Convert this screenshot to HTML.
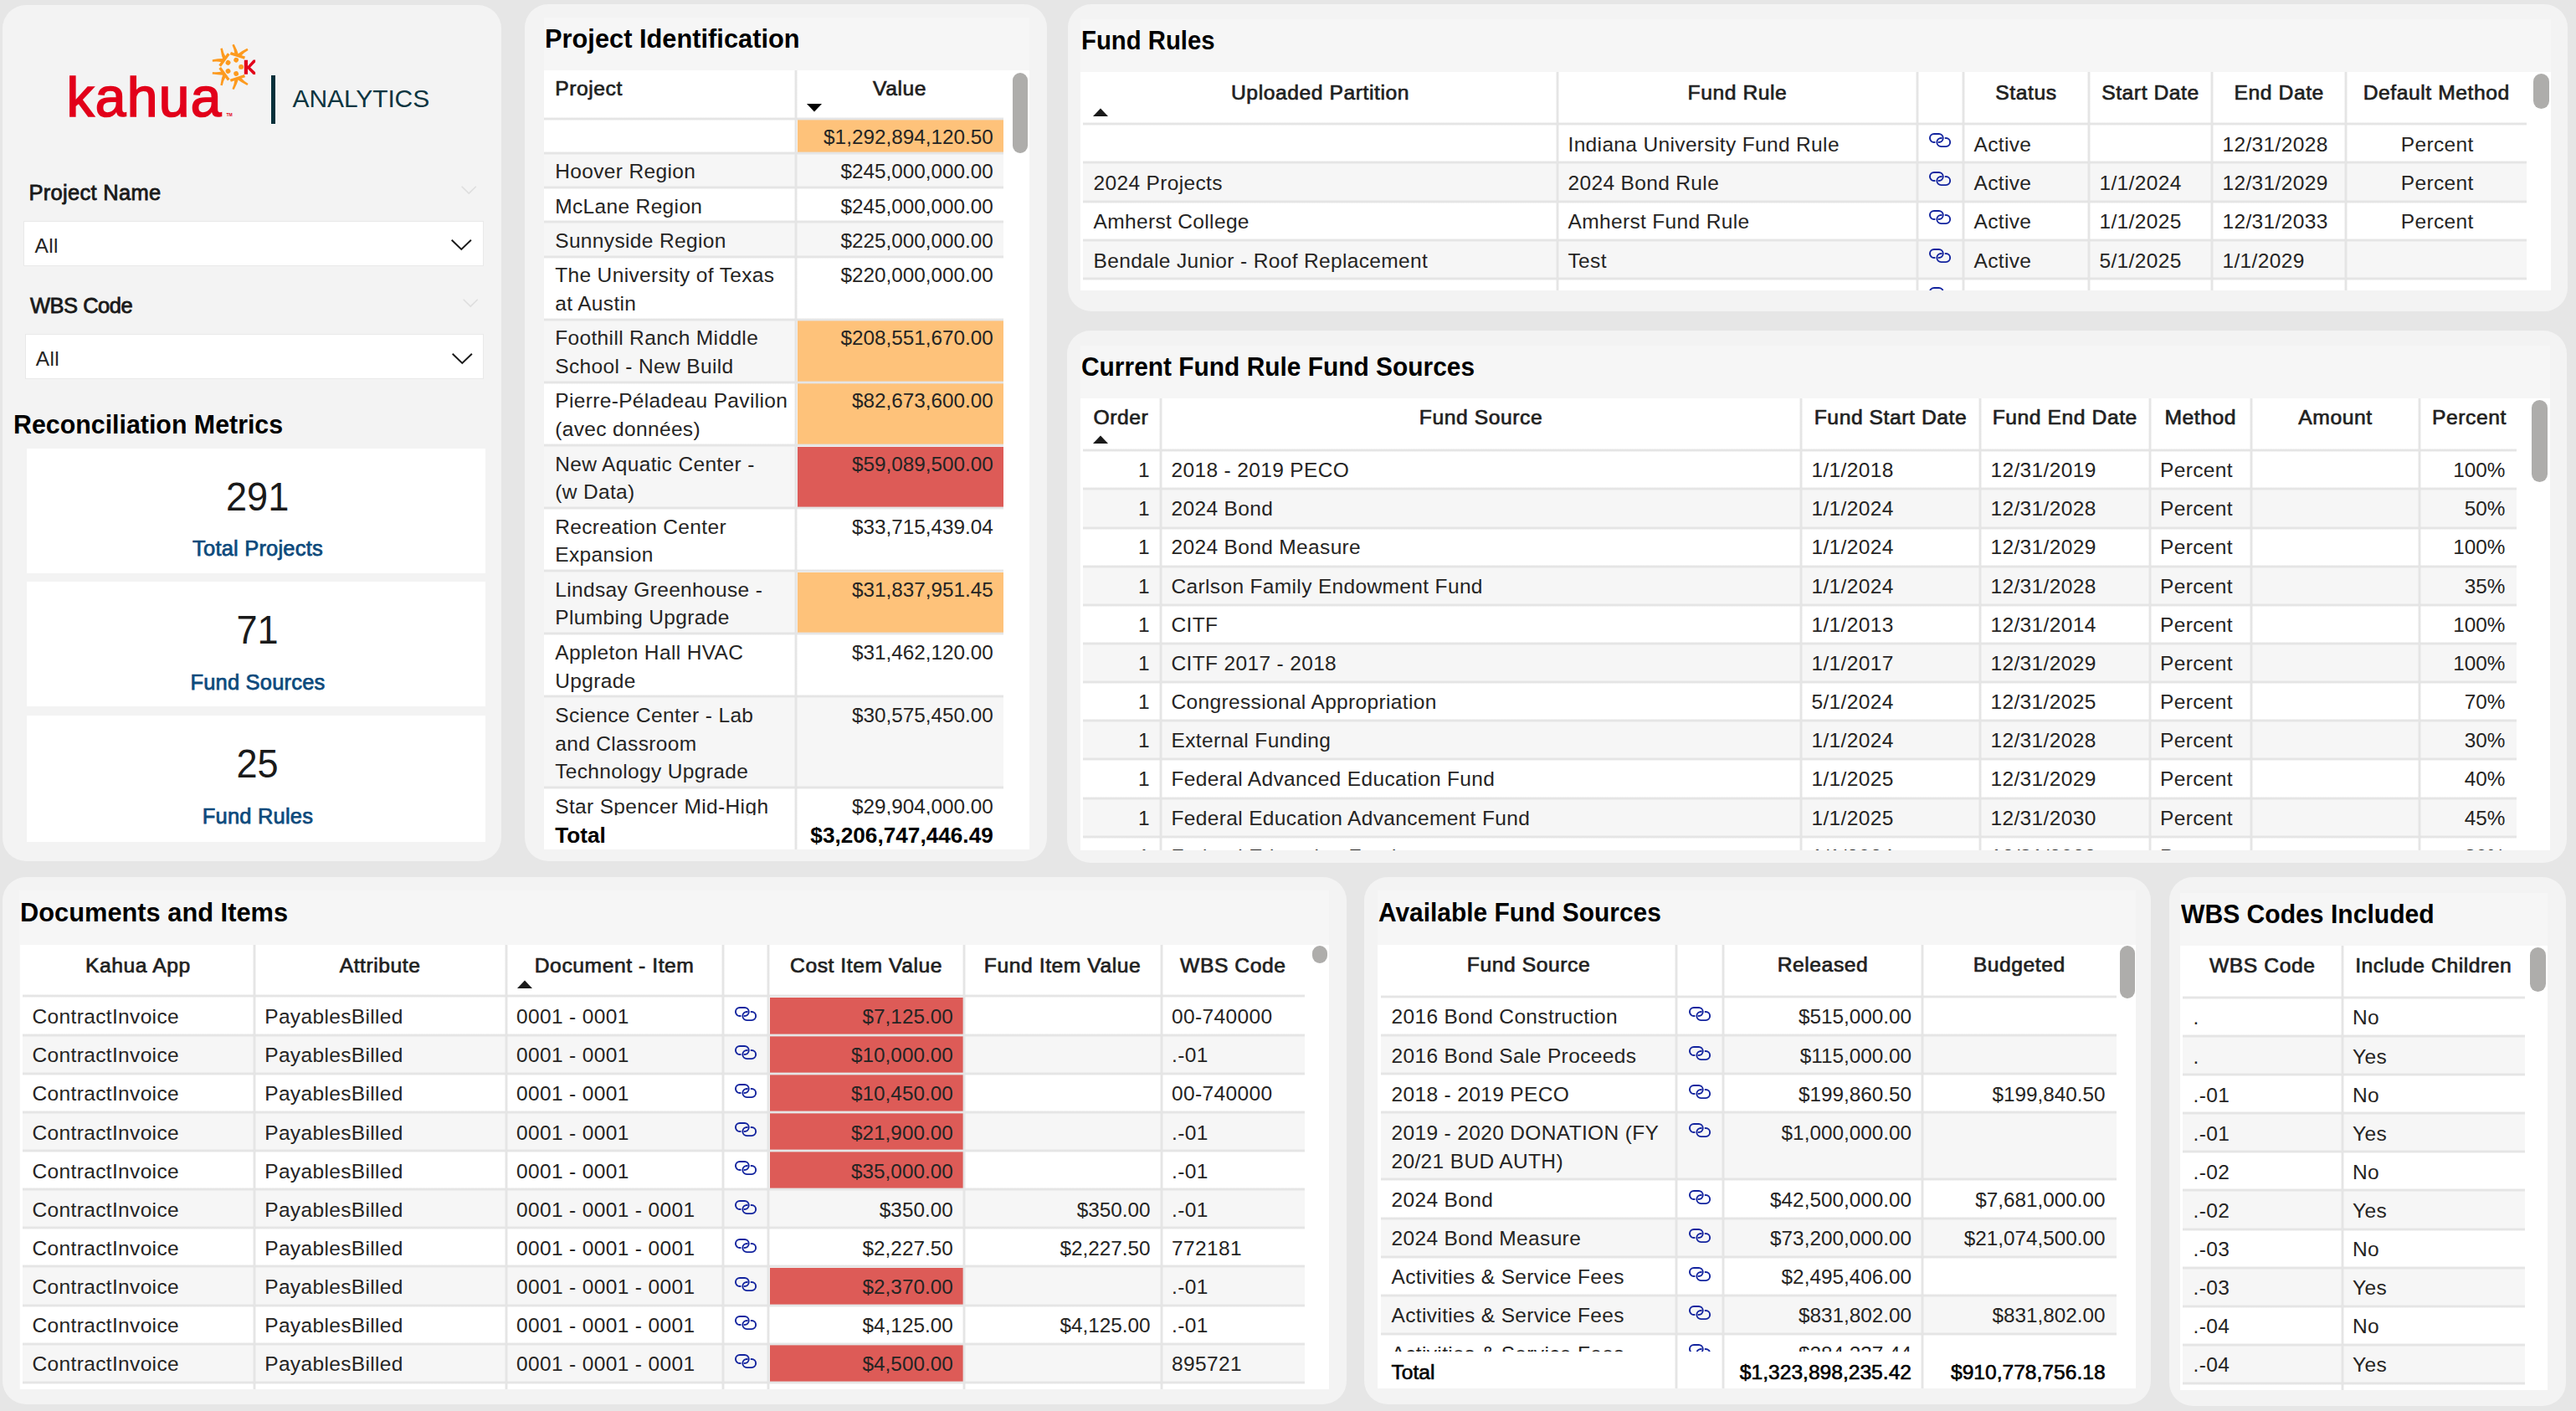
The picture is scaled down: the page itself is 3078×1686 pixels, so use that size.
<!DOCTYPE html>
<html><head><meta charset="utf-8"><title>Kahua Analytics</title>
<style>
*{box-sizing:border-box;margin:0;padding:0}
html,body{width:3078px;height:1686px;overflow:hidden;background:#e6e6e6}
body{position:relative;font-family:"Liberation Sans",sans-serif;color:#252423;font-size:24.5px;line-height:34px}
.abs{position:absolute}
.panel{position:absolute;background:#f3f3f3;border-radius:28px}
.vis{position:absolute;background:#f6f6f6}
.title{position:absolute;font-weight:bold;color:#000;white-space:nowrap;line-height:40px;transform-origin:0 0}
.tbl{position:absolute;background:#fff;overflow:hidden}
.clip{position:absolute;overflow:hidden}
.row{position:absolute;overflow:hidden}
.fill{position:absolute}
.c{position:absolute;white-space:nowrap;line-height:33.8px;font-size:24.5px;letter-spacing:0.35px;color:#252423}
.c.n{font-size:24.3px;letter-spacing:0}
.c.pc{padding-right:1px}
.c.wrap{white-space:normal}
.h{position:absolute;white-space:nowrap;line-height:34px;font-size:24.7px;letter-spacing:0.55px;-webkit-text-stroke:0.7px #1f1f1f;color:#1f1f1f}
.h.t{color:#000;font-size:26.2px;font-weight:bold;letter-spacing:0;-webkit-text-stroke:0}
.h.t.sb2{font-weight:normal;-webkit-text-stroke:0.6px #000}
.left{text-align:left}.right{text-align:right}.center{text-align:center}
.hdr{position:absolute;background:#fff}
.tot{position:absolute;background:#fff}
.hl{position:absolute;height:4px;margin-top:-1px;background:linear-gradient(to bottom,rgba(226,226,226,.4) 0,rgba(226,226,226,.4) 1px,#e5e5e5 1px,#e5e5e5 3px,rgba(226,226,226,.4) 3px,rgba(226,226,226,.4) 4px)}
.vl{position:absolute;width:4px;margin-left:-1px;background:linear-gradient(to right,rgba(226,226,226,.4) 0,rgba(226,226,226,.4) 1px,#e5e5e5 1px,#e5e5e5 3px,rgba(226,226,226,.4) 3px,rgba(226,226,226,.4) 4px)}
.lk{position:absolute;overflow:visible}
.lk path{fill:none;stroke:#12239e;stroke-width:1.9;stroke-linecap:round}
.sb{position:absolute;background:#aeadab;border-radius:10px}
.dd{position:absolute;background:#fff;border:1px solid #e9e9e9}
.card{position:absolute;background:#fff}
.num{position:absolute;left:2px;width:100%;text-align:center;font-size:48px;line-height:50px;color:#1a1a1a;transform:scaleX(0.94);transform-origin:50% 50%}
.lbl{position:absolute;left:2px;width:100%;text-align:center;font-size:25.5px;letter-spacing:0.2px;line-height:30px;-webkit-text-stroke:0.75px #0c4a7c;color:#0c4a7c}
.sl{position:absolute;font-size:25.5px;letter-spacing:0.3px;-webkit-text-stroke:0.8px #1a1a1a;line-height:30px;color:#1a1a1a;white-space:nowrap}
</style></head><body>

<div class="panel" style="left:3px;top:6px;width:596px;height:1023px"></div>
<div class="abs" style="left:79.4px;top:76.6px;font-size:66px;line-height:78px;color:#e2001a;-webkit-text-stroke:1.7px #e2001a;white-space:nowrap;letter-spacing:1.3px">kahua</div>
<div class="abs" style="left:270.5px;top:134.3px;font-size:5px;line-height:6px;color:#e2001a;font-weight:bold">TM</div>
<svg class="abs" style="left:244px;top:45px" width="70" height="70" viewBox="-35.5 -34.9 70 70"><g fill="#fd9a1e"><circle cx="8.6" cy="0" r="2.9"/><g transform="rotate(18)"><circle cx="0" cy="-8.6" r="2.9"/><rect x="-9" y="-15.9" width="18" height="3.3"/><path d="M-4,-15.2 L1.6,-14.4 Q-2.4,-20.4 -8.2,-25.9 L-10.1,-24.3 Q-6,-20 -4,-15.2 Z"/><path d="M4,-15.2 L-1.6,-14.4 Q2.4,-20.4 8.2,-25.9 L10.1,-24.3 Q6,-20 4,-15.2 Z"/></g><g transform="rotate(-54)"><circle cx="0" cy="-8.6" r="2.9"/><rect x="-9" y="-15.9" width="18" height="3.3"/><path d="M-4,-15.2 L1.6,-14.4 Q-2.4,-20.4 -8.2,-25.9 L-10.1,-24.3 Q-6,-20 -4,-15.2 Z"/><path d="M4,-15.2 L-1.6,-14.4 Q2.4,-20.4 8.2,-25.9 L10.1,-24.3 Q6,-20 4,-15.2 Z"/></g><g transform="rotate(-126)"><circle cx="0" cy="-8.6" r="2.9"/><rect x="-9" y="-15.9" width="18" height="3.3"/><path d="M-4,-15.2 L1.6,-14.4 Q-2.4,-20.4 -8.2,-25.9 L-10.1,-24.3 Q-6,-20 -4,-15.2 Z"/><path d="M4,-15.2 L-1.6,-14.4 Q2.4,-20.4 8.2,-25.9 L10.1,-24.3 Q6,-20 4,-15.2 Z"/></g><g transform="rotate(162)"><circle cx="0" cy="-8.6" r="2.9"/><rect x="-9" y="-15.9" width="18" height="3.3"/><path d="M-4,-15.2 L1.6,-14.4 Q-2.4,-20.4 -8.2,-25.9 L-10.1,-24.3 Q-6,-20 -4,-15.2 Z"/><path d="M4,-15.2 L-1.6,-14.4 Q2.4,-20.4 8.2,-25.9 L10.1,-24.3 Q6,-20 4,-15.2 Z"/></g></g><path d="M12.3,-8.1 h4.2 v17 h-4.2 Z M16.3,-0.6 L23.2,-8.4 L25.6,-8.4 L25.6,-5.6 L19.6,0.6 L25.6,6.4 L25.6,9.2 L23,9.2 L16.3,2.2 Z" fill="#e2001a"/></svg>
<div class="abs" style="left:324px;top:90px;width:5px;height:58px;background:#06303a"></div>
<div class="abs" style="left:349.5px;top:98px;font-size:30px;line-height:40px;color:#0c3540;letter-spacing:-0.1px;white-space:nowrap">ANALYTICS</div>
<div class="sl" style="left:34.5px;top:215.4px">Project Name</div>
<svg class="abs" style="left:551px;top:221.5px;overflow:visible" width="18.5" height="10" viewBox="0 0 18.5 10"><path d="M0.7,0.7 L9.25,9.1 L17.8,0.7" fill="none" stroke="#dedede" stroke-width="1.6"/></svg>
<div class="dd" style="left:28px;top:263.5px;width:550px;height:54px"></div>
<div class="c" style="left:41.5px;top:277.2px">All</div>
<svg class="abs" style="left:538.6px;top:286.4px;overflow:visible" width="24.6" height="12.8" viewBox="0 0 24.6 12.8"><path d="M0.7,0.7 L12.3,11.9 L23.900000000000002,0.7" fill="none" stroke="#1a1a1a" stroke-width="2"/></svg>
<div class="sl" style="left:36px;top:349.8px;letter-spacing:-0.5px">WBS Code</div>
<svg class="abs" style="left:552.5px;top:356.5px;overflow:visible" width="18.5" height="10" viewBox="0 0 18.5 10"><path d="M0.7,0.7 L9.25,9.1 L17.8,0.7" fill="none" stroke="#dedede" stroke-width="1.6"/></svg>
<div class="dd" style="left:29.5px;top:398.7px;width:548.5px;height:54px"></div>
<div class="c" style="left:42.8px;top:412.2px">All</div>
<svg class="abs" style="left:539.6px;top:421.6px;overflow:visible" width="24.6" height="12.8" viewBox="0 0 24.6 12.8"><path d="M0.7,0.7 L12.3,11.9 L23.900000000000002,0.7" fill="none" stroke="#1a1a1a" stroke-width="2"/></svg>
<div class="title" style="left:15.5px;top:487.4px;font-size:31.5px;transform:scaleX(0.9635)">Reconciliation Metrics</div>
<div class="card" style="left:32.4px;top:535.8px;width:547.2px;height:149.1px"><div class="num" style="top:33.0px">291</div><div class="lbl" style="top:104.6px">Total Projects</div></div>
<div class="card" style="left:32.4px;top:695px;width:547.2px;height:149.0px"><div class="num" style="top:33.0px">71</div><div class="lbl" style="top:104.6px">Fund Sources</div></div>
<div class="card" style="left:32.4px;top:855px;width:547.2px;height:151.0px"><div class="num" style="top:33.0px">25</div><div class="lbl" style="top:104.6px">Fund Rules</div></div>
<div class="panel" style="left:627px;top:5px;width:624px;height:1024px"></div>
<div class="vis" style="left:650px;top:21px;width:580px;height:994px"></div>
<div class="title" style="left:651px;top:25.8px;font-size:31.5px;transform:scaleX(0.9778)">Project Identification</div>
<div class="tbl" style="left:650px;top:84px;width:580px;height:931px">
<div class="clip" style="left:0;top:57.5px;width:580px;height:832.5px">
<div class="row" style="left:0px;top:0.00px;width:549px;height:41.30px;background:#fff">
<div class="fill" style="left:302.5px;top:1.5px;width:246.5px;height:39.80px;background:#fec27a"></div>
<div class="c n right" style="left:314.2px;top:5.50px;width:222.60px">$1,292,894,120.50</div>
</div>
<div class="row" style="left:0px;top:41.30px;width:549px;height:41.30px;background:#f6f6f6">
<div class="c x left" style="left:13.2px;top:5.50px;width:276.60px">Hoover Region</div>
<div class="c n right" style="left:314.2px;top:5.50px;width:222.60px">$245,000,000.00</div>
</div>
<div class="row" style="left:0px;top:82.60px;width:549px;height:41.30px;background:#fff">
<div class="c x left" style="left:13.2px;top:5.50px;width:276.60px">McLane Region</div>
<div class="c n right" style="left:314.2px;top:5.50px;width:222.60px">$245,000,000.00</div>
</div>
<div class="row" style="left:0px;top:123.90px;width:549px;height:41.30px;background:#f6f6f6">
<div class="c x left" style="left:13.2px;top:5.50px;width:276.60px">Sunnyside Region</div>
<div class="c n right" style="left:314.2px;top:5.50px;width:222.60px">$225,000,000.00</div>
</div>
<div class="row" style="left:0px;top:165.20px;width:549px;height:75.10px;background:#fff">
<div class="c x left" style="left:13.2px;top:5.50px;width:276.60px">The University of Texas<br>at Austin</div>
<div class="c n right" style="left:314.2px;top:5.50px;width:222.60px">$220,000,000.00</div>
</div>
<div class="row" style="left:0px;top:240.30px;width:549px;height:75.10px;background:#f6f6f6">
<div class="c x left" style="left:13.2px;top:5.50px;width:276.60px">Foothill Ranch Middle<br>School - New Build</div>
<div class="fill" style="left:302.5px;top:1.5px;width:246.5px;height:73.60px;background:#fec27a"></div>
<div class="c n right" style="left:314.2px;top:5.50px;width:222.60px">$208,551,670.00</div>
</div>
<div class="row" style="left:0px;top:315.40px;width:549px;height:75.10px;background:#fff">
<div class="c x left" style="left:13.2px;top:5.50px;width:276.60px">Pierre-Péladeau Pavilion<br>(avec données)</div>
<div class="fill" style="left:302.5px;top:1.5px;width:246.5px;height:73.60px;background:#fec27a"></div>
<div class="c n right" style="left:314.2px;top:5.50px;width:222.60px">$82,673,600.00</div>
</div>
<div class="row" style="left:0px;top:390.50px;width:549px;height:75.10px;background:#f6f6f6">
<div class="c x left" style="left:13.2px;top:5.50px;width:276.60px">New Aquatic Center -<br>(w Data)</div>
<div class="fill" style="left:302.5px;top:1.5px;width:246.5px;height:73.60px;background:#dd5b57"></div>
<div class="c n right" style="left:314.2px;top:5.50px;width:222.60px">$59,089,500.00</div>
</div>
<div class="row" style="left:0px;top:465.60px;width:549px;height:75.10px;background:#fff">
<div class="c x left" style="left:13.2px;top:5.50px;width:276.60px">Recreation Center<br>Expansion</div>
<div class="c n right" style="left:314.2px;top:5.50px;width:222.60px">$33,715,439.04</div>
</div>
<div class="row" style="left:0px;top:540.70px;width:549px;height:75.10px;background:#f6f6f6">
<div class="c x left" style="left:13.2px;top:5.50px;width:276.60px">Lindsay Greenhouse -<br>Plumbing Upgrade</div>
<div class="fill" style="left:302.5px;top:1.5px;width:246.5px;height:73.60px;background:#fec27a"></div>
<div class="c n right" style="left:314.2px;top:5.50px;width:222.60px">$31,837,951.45</div>
</div>
<div class="row" style="left:0px;top:615.80px;width:549px;height:75.10px;background:#fff">
<div class="c x left" style="left:13.2px;top:5.50px;width:276.60px">Appleton Hall HVAC<br>Upgrade</div>
<div class="c n right" style="left:314.2px;top:5.50px;width:222.60px">$31,462,120.00</div>
</div>
<div class="row" style="left:0px;top:690.90px;width:549px;height:108.90px;background:#f6f6f6">
<div class="c x left" style="left:13.2px;top:5.50px;width:276.60px">Science Center - Lab<br>and Classroom<br>Technology Upgrade</div>
<div class="c n right" style="left:314.2px;top:5.50px;width:222.60px">$30,575,450.00</div>
</div>
<div class="row" style="left:0px;top:799.80px;width:549px;height:41.30px;background:#fff">
<div class="c x left" style="left:13.2px;top:5.50px;width:276.60px">Star Spencer Mid-High</div>
<div class="c n right" style="left:314.2px;top:5.50px;width:222.60px">$29,904,000.00</div>
</div>
</div>
<div class="hdr" style="left:0;top:0;width:580px;height:57.5px">
<div class="h left" style="left:13.2px;top:5.14px;width:274.6px">Project</div>
<div class="h center" style="left:314.2px;top:5.14px;width:221.6px">Value</div>
<svg class="abs" style="left:314.4px;top:40.3px" width="18" height="10" viewBox="0 0 18 10"><path d="M0,0 L18,0 L9,9.5 Z" fill="#000"/></svg>
</div>
<div class="tot" style="left:0;top:890px;width:580px;height:41px">
<div class="h t  left" style="font-size:26.2px;left:13.2px;top:7.14px;width:276.60px">Total</div>
<div class="h t  right" style="font-size:26.2px;left:314.2px;top:7.14px;width:222.60px">$3,206,747,446.49</div>
</div>
<div class="hl" style="left:0px;top:56.5px;width:549px"></div>
<div class="hl" style="left:0px;top:97.80px;width:549px"></div>
<div class="hl" style="left:0px;top:139.10px;width:549px"></div>
<div class="hl" style="left:0px;top:180.40px;width:549px"></div>
<div class="hl" style="left:0px;top:221.70px;width:549px"></div>
<div class="hl" style="left:0px;top:296.80px;width:549px"></div>
<div class="hl" style="left:0px;top:371.90px;width:549px"></div>
<div class="hl" style="left:0px;top:447.00px;width:549px"></div>
<div class="hl" style="left:0px;top:522.10px;width:549px"></div>
<div class="hl" style="left:0px;top:597.20px;width:549px"></div>
<div class="hl" style="left:0px;top:672.30px;width:549px"></div>
<div class="hl" style="left:0px;top:747.40px;width:549px"></div>
<div class="hl" style="left:0px;top:856.30px;width:549px"></div>
<div class="vl" style="left:300px;top:0;height:931px"></div>
</div>
<div class="sb" style="left:1210px;top:87px;width:17.5px;height:96px"></div>
<div class="panel" style="left:1275.9px;top:4.8px;width:1791.9px;height:367px"></div>
<div class="vis" style="left:1290.7px;top:23px;width:1757.5px;height:323.8px"></div>
<div class="title" style="left:1291.5px;top:27.8px;font-size:31.5px;transform:scaleX(0.9302)">Fund Rules</div>
<div class="tbl" style="left:1290.7px;top:86.1px;width:1757.4999999999998px;height:260.70000000000005px">
<div class="clip" style="left:0;top:62.1px;width:1757.4999999999998px;height:198.60000000000005px">
<div class="row" style="left:3.2999999999999545px;top:0.00px;width:1725px;height:46.20px;background:#fff">
<div class="c x left" style="left:579.5px;top:7.90px;width:407.00px">Indiana University Fund Rule</div>
<svg class="lk" style="left:1011.5px;top:10.5px" width="27" height="18" viewBox="0 0 27 18"><path d="M6.7,11.05 L6,11.05 A5.05,5.05 0 0 1 0.95,6 A5.05,5.05 0 0 1 6,0.95 L11.7,0.95 A5.05,5.05 0 0 1 16.75,6 A5.05,5.05 0 0 1 11.7,11.05 L11.5,11.05"/><path d="M19.6,6.05 L20.1,6.05 A5.05,5.05 0 0 1 25.15,11.1 A5.05,5.05 0 0 1 20.1,16.15 L14.4,16.15 A5.05,5.05 0 0 1 9.35,11.1 A5.05,5.05 0 0 1 14.4,6.05 L14.8,6.05"/></svg>
<div class="c x left" style="left:1064.5px;top:7.90px;width:127.00px">Active</div>
<div class="c x left" style="left:1361.5px;top:7.90px;width:137.50px">12/31/2028</div>
<div class="c x center" style="left:1522.0px;top:7.90px;width:192.50px">Percent</div>
</div>
<div class="row" style="left:3.2999999999999545px;top:46.20px;width:1725px;height:46.20px;background:#f6f6f6">
<div class="c x left" style="left:12.5px;top:7.90px;width:544.00px">2024 Projects</div>
<div class="c x left" style="left:579.5px;top:7.90px;width:407.00px">2024 Bond Rule</div>
<svg class="lk" style="left:1011.5px;top:10.5px" width="27" height="18" viewBox="0 0 27 18"><path d="M6.7,11.05 L6,11.05 A5.05,5.05 0 0 1 0.95,6 A5.05,5.05 0 0 1 6,0.95 L11.7,0.95 A5.05,5.05 0 0 1 16.75,6 A5.05,5.05 0 0 1 11.7,11.05 L11.5,11.05"/><path d="M19.6,6.05 L20.1,6.05 A5.05,5.05 0 0 1 25.15,11.1 A5.05,5.05 0 0 1 20.1,16.15 L14.4,16.15 A5.05,5.05 0 0 1 9.35,11.1 A5.05,5.05 0 0 1 14.4,6.05 L14.8,6.05"/></svg>
<div class="c x left" style="left:1064.5px;top:7.90px;width:127.00px">Active</div>
<div class="c x left" style="left:1214.5px;top:7.90px;width:124.00px">1/1/2024</div>
<div class="c x left" style="left:1361.5px;top:7.90px;width:137.50px">12/31/2029</div>
<div class="c x center" style="left:1522.0px;top:7.90px;width:192.50px">Percent</div>
</div>
<div class="row" style="left:3.2999999999999545px;top:92.40px;width:1725px;height:46.20px;background:#fff">
<div class="c x left" style="left:12.5px;top:7.90px;width:544.00px">Amherst College</div>
<div class="c x left" style="left:579.5px;top:7.90px;width:407.00px">Amherst Fund Rule</div>
<svg class="lk" style="left:1011.5px;top:10.5px" width="27" height="18" viewBox="0 0 27 18"><path d="M6.7,11.05 L6,11.05 A5.05,5.05 0 0 1 0.95,6 A5.05,5.05 0 0 1 6,0.95 L11.7,0.95 A5.05,5.05 0 0 1 16.75,6 A5.05,5.05 0 0 1 11.7,11.05 L11.5,11.05"/><path d="M19.6,6.05 L20.1,6.05 A5.05,5.05 0 0 1 25.15,11.1 A5.05,5.05 0 0 1 20.1,16.15 L14.4,16.15 A5.05,5.05 0 0 1 9.35,11.1 A5.05,5.05 0 0 1 14.4,6.05 L14.8,6.05"/></svg>
<div class="c x left" style="left:1064.5px;top:7.90px;width:127.00px">Active</div>
<div class="c x left" style="left:1214.5px;top:7.90px;width:124.00px">1/1/2025</div>
<div class="c x left" style="left:1361.5px;top:7.90px;width:137.50px">12/31/2033</div>
<div class="c x center" style="left:1522.0px;top:7.90px;width:192.50px">Percent</div>
</div>
<div class="row" style="left:3.2999999999999545px;top:138.60px;width:1725px;height:46.20px;background:#f6f6f6">
<div class="c x left" style="left:12.5px;top:7.90px;width:544.00px">Bendale Junior - Roof Replacement</div>
<div class="c x left" style="left:579.5px;top:7.90px;width:407.00px">Test</div>
<svg class="lk" style="left:1011.5px;top:10.5px" width="27" height="18" viewBox="0 0 27 18"><path d="M6.7,11.05 L6,11.05 A5.05,5.05 0 0 1 0.95,6 A5.05,5.05 0 0 1 6,0.95 L11.7,0.95 A5.05,5.05 0 0 1 16.75,6 A5.05,5.05 0 0 1 11.7,11.05 L11.5,11.05"/><path d="M19.6,6.05 L20.1,6.05 A5.05,5.05 0 0 1 25.15,11.1 A5.05,5.05 0 0 1 20.1,16.15 L14.4,16.15 A5.05,5.05 0 0 1 9.35,11.1 A5.05,5.05 0 0 1 14.4,6.05 L14.8,6.05"/></svg>
<div class="c x left" style="left:1064.5px;top:7.90px;width:127.00px">Active</div>
<div class="c x left" style="left:1214.5px;top:7.90px;width:124.00px">5/1/2025</div>
<div class="c x left" style="left:1361.5px;top:7.90px;width:137.50px">1/1/2029</div>
</div>
<div class="row" style="left:3.2999999999999545px;top:184.80px;width:1725px;height:46.20px;background:#fff">
<svg class="lk" style="left:1011.5px;top:10.5px" width="27" height="18" viewBox="0 0 27 18"><path d="M6.7,11.05 L6,11.05 A5.05,5.05 0 0 1 0.95,6 A5.05,5.05 0 0 1 6,0.95 L11.7,0.95 A5.05,5.05 0 0 1 16.75,6 A5.05,5.05 0 0 1 11.7,11.05 L11.5,11.05"/><path d="M19.6,6.05 L20.1,6.05 A5.05,5.05 0 0 1 25.15,11.1 A5.05,5.05 0 0 1 20.1,16.15 L14.4,16.15 A5.05,5.05 0 0 1 9.35,11.1 A5.05,5.05 0 0 1 14.4,6.05 L14.8,6.05"/></svg>
</div>
</div>
<div class="hdr" style="left:0;top:0;width:1757.4999999999998px;height:62.1px">
<div class="h center" style="left:15.799999999999955px;top:7.54px;width:542.0px">Uploaded Partition</div>
<div class="h center" style="left:582.8px;top:7.54px;width:405.0px">Fund Rule</div>
<div class="h center" style="left:1067.8px;top:7.54px;width:125.0px">Status</div>
<div class="h center" style="left:1217.8px;top:7.54px;width:122.0px">Start Date</div>
<div class="h center" style="left:1364.8px;top:7.54px;width:135.5px">End Date</div>
<div class="h center" style="left:1525.3px;top:7.54px;width:190.5px">Default Method</div>
<svg class="abs" style="left:15.099999999999909px;top:42.900000000000006px" width="18" height="10" viewBox="0 0 18 10"><path d="M0,10 L9,0.5 L18,10 Z" fill="#1a1a1a"/></svg>
</div>
<div class="hl" style="left:3.2999999999999545px;top:61.1px;width:1725px"></div>
<div class="hl" style="left:3.2999999999999545px;top:107.30px;width:1725px"></div>
<div class="hl" style="left:3.2999999999999545px;top:153.50px;width:1725px"></div>
<div class="hl" style="left:3.2999999999999545px;top:199.70px;width:1725px"></div>
<div class="hl" style="left:3.2999999999999545px;top:245.90px;width:1725px"></div>
<div class="vl" style="left:569.3px;top:0;height:260.70000000000005px"></div>
<div class="vl" style="left:999.3px;top:0;height:260.70000000000005px"></div>
<div class="vl" style="left:1054.3px;top:0;height:260.70000000000005px"></div>
<div class="vl" style="left:1204.3px;top:0;height:260.70000000000005px"></div>
<div class="vl" style="left:1351.3px;top:0;height:260.70000000000005px"></div>
<div class="vl" style="left:1511.8px;top:0;height:260.70000000000005px"></div>
</div>
<div class="sb" style="left:3026.8px;top:87.5px;width:19.3px;height:42.3px"></div>
<div class="panel" style="left:1274.6px;top:394.9px;width:1792px;height:635.8px"></div>
<div class="vis" style="left:1290.7px;top:413px;width:1756px;height:603.4px"></div>
<div class="title" style="left:1291.5px;top:417.9px;font-size:31.5px;transform:scaleX(0.9492)">Current Fund Rule Fund Sources</div>
<div class="tbl" style="left:1290.7px;top:476px;width:1755.9999999999998px;height:540.4px">
<div class="clip" style="left:0;top:62.2px;width:1755.9999999999998px;height:478.2px">
<div class="row" style="left:3.2999999999999545px;top:0.00px;width:1713.5px;height:46.15px;background:#fff">
<div class="c x right" style="left:12.5px;top:7.00px;width:67.50px">1</div>
<div class="c x left" style="left:105.5px;top:7.00px;width:742.00px">2018 - 2019 PECO</div>
<div class="c x left" style="left:870.5px;top:7.00px;width:191.00px">1/1/2018</div>
<div class="c x left" style="left:1084.5px;top:7.00px;width:179.60px">12/31/2019</div>
<div class="c x left" style="left:1287.1px;top:7.00px;width:98.40px">Percent</div>
<div class="c n pc right" style="left:1609.5px;top:7.00px;width:91.00px">100%</div>
</div>
<div class="row" style="left:3.2999999999999545px;top:46.15px;width:1713.5px;height:46.15px;background:#f6f6f6">
<div class="c x right" style="left:12.5px;top:7.00px;width:67.50px">1</div>
<div class="c x left" style="left:105.5px;top:7.00px;width:742.00px">2024 Bond</div>
<div class="c x left" style="left:870.5px;top:7.00px;width:191.00px">1/1/2024</div>
<div class="c x left" style="left:1084.5px;top:7.00px;width:179.60px">12/31/2028</div>
<div class="c x left" style="left:1287.1px;top:7.00px;width:98.40px">Percent</div>
<div class="c n pc right" style="left:1609.5px;top:7.00px;width:91.00px">50%</div>
</div>
<div class="row" style="left:3.2999999999999545px;top:92.30px;width:1713.5px;height:46.15px;background:#fff">
<div class="c x right" style="left:12.5px;top:7.00px;width:67.50px">1</div>
<div class="c x left" style="left:105.5px;top:7.00px;width:742.00px">2024 Bond Measure</div>
<div class="c x left" style="left:870.5px;top:7.00px;width:191.00px">1/1/2024</div>
<div class="c x left" style="left:1084.5px;top:7.00px;width:179.60px">12/31/2029</div>
<div class="c x left" style="left:1287.1px;top:7.00px;width:98.40px">Percent</div>
<div class="c n pc right" style="left:1609.5px;top:7.00px;width:91.00px">100%</div>
</div>
<div class="row" style="left:3.2999999999999545px;top:138.45px;width:1713.5px;height:46.15px;background:#f6f6f6">
<div class="c x right" style="left:12.5px;top:7.00px;width:67.50px">1</div>
<div class="c x left" style="left:105.5px;top:7.00px;width:742.00px">Carlson Family Endowment Fund</div>
<div class="c x left" style="left:870.5px;top:7.00px;width:191.00px">1/1/2024</div>
<div class="c x left" style="left:1084.5px;top:7.00px;width:179.60px">12/31/2028</div>
<div class="c x left" style="left:1287.1px;top:7.00px;width:98.40px">Percent</div>
<div class="c n pc right" style="left:1609.5px;top:7.00px;width:91.00px">35%</div>
</div>
<div class="row" style="left:3.2999999999999545px;top:184.60px;width:1713.5px;height:46.15px;background:#fff">
<div class="c x right" style="left:12.5px;top:7.00px;width:67.50px">1</div>
<div class="c x left" style="left:105.5px;top:7.00px;width:742.00px">CITF</div>
<div class="c x left" style="left:870.5px;top:7.00px;width:191.00px">1/1/2013</div>
<div class="c x left" style="left:1084.5px;top:7.00px;width:179.60px">12/31/2014</div>
<div class="c x left" style="left:1287.1px;top:7.00px;width:98.40px">Percent</div>
<div class="c n pc right" style="left:1609.5px;top:7.00px;width:91.00px">100%</div>
</div>
<div class="row" style="left:3.2999999999999545px;top:230.75px;width:1713.5px;height:46.15px;background:#f6f6f6">
<div class="c x right" style="left:12.5px;top:7.00px;width:67.50px">1</div>
<div class="c x left" style="left:105.5px;top:7.00px;width:742.00px">CITF 2017 - 2018</div>
<div class="c x left" style="left:870.5px;top:7.00px;width:191.00px">1/1/2017</div>
<div class="c x left" style="left:1084.5px;top:7.00px;width:179.60px">12/31/2029</div>
<div class="c x left" style="left:1287.1px;top:7.00px;width:98.40px">Percent</div>
<div class="c n pc right" style="left:1609.5px;top:7.00px;width:91.00px">100%</div>
</div>
<div class="row" style="left:3.2999999999999545px;top:276.90px;width:1713.5px;height:46.15px;background:#fff">
<div class="c x right" style="left:12.5px;top:7.00px;width:67.50px">1</div>
<div class="c x left" style="left:105.5px;top:7.00px;width:742.00px">Congressional Appropriation</div>
<div class="c x left" style="left:870.5px;top:7.00px;width:191.00px">5/1/2024</div>
<div class="c x left" style="left:1084.5px;top:7.00px;width:179.60px">12/31/2025</div>
<div class="c x left" style="left:1287.1px;top:7.00px;width:98.40px">Percent</div>
<div class="c n pc right" style="left:1609.5px;top:7.00px;width:91.00px">70%</div>
</div>
<div class="row" style="left:3.2999999999999545px;top:323.05px;width:1713.5px;height:46.15px;background:#f6f6f6">
<div class="c x right" style="left:12.5px;top:7.00px;width:67.50px">1</div>
<div class="c x left" style="left:105.5px;top:7.00px;width:742.00px">External Funding</div>
<div class="c x left" style="left:870.5px;top:7.00px;width:191.00px">1/1/2024</div>
<div class="c x left" style="left:1084.5px;top:7.00px;width:179.60px">12/31/2028</div>
<div class="c x left" style="left:1287.1px;top:7.00px;width:98.40px">Percent</div>
<div class="c n pc right" style="left:1609.5px;top:7.00px;width:91.00px">30%</div>
</div>
<div class="row" style="left:3.2999999999999545px;top:369.20px;width:1713.5px;height:46.15px;background:#fff">
<div class="c x right" style="left:12.5px;top:7.00px;width:67.50px">1</div>
<div class="c x left" style="left:105.5px;top:7.00px;width:742.00px">Federal Advanced Education Fund</div>
<div class="c x left" style="left:870.5px;top:7.00px;width:191.00px">1/1/2025</div>
<div class="c x left" style="left:1084.5px;top:7.00px;width:179.60px">12/31/2029</div>
<div class="c x left" style="left:1287.1px;top:7.00px;width:98.40px">Percent</div>
<div class="c n pc right" style="left:1609.5px;top:7.00px;width:91.00px">40%</div>
</div>
<div class="row" style="left:3.2999999999999545px;top:415.35px;width:1713.5px;height:46.15px;background:#f6f6f6">
<div class="c x right" style="left:12.5px;top:7.00px;width:67.50px">1</div>
<div class="c x left" style="left:105.5px;top:7.00px;width:742.00px">Federal Education Advancement Fund</div>
<div class="c x left" style="left:870.5px;top:7.00px;width:191.00px">1/1/2025</div>
<div class="c x left" style="left:1084.5px;top:7.00px;width:179.60px">12/31/2030</div>
<div class="c x left" style="left:1287.1px;top:7.00px;width:98.40px">Percent</div>
<div class="c n pc right" style="left:1609.5px;top:7.00px;width:91.00px">45%</div>
</div>
<div class="row" style="left:3.2999999999999545px;top:461.50px;width:1713.5px;height:46.15px;background:#fff">
<div class="c x right" style="left:12.5px;top:7.00px;width:67.50px">1</div>
<div class="c x left" style="left:105.5px;top:7.00px;width:742.00px">Federal Education Fund</div>
<div class="c x left" style="left:870.5px;top:7.00px;width:191.00px">1/1/2024</div>
<div class="c x left" style="left:1084.5px;top:7.00px;width:179.60px">12/31/2028</div>
<div class="c x left" style="left:1287.1px;top:7.00px;width:98.40px">Percent</div>
<div class="c n pc right" style="left:1609.5px;top:7.00px;width:91.00px">30%</div>
</div>
</div>
<div class="hdr" style="left:0;top:0;width:1755.9999999999998px;height:62.2px">
<div class="h left" style="left:15.799999999999955px;top:6.44px;width:68.0px">Order</div>
<div class="h center" style="left:108.79999999999995px;top:6.44px;width:740.0px">Fund Source</div>
<div class="h center" style="left:873.8px;top:6.44px;width:189.0px">Fund Start Date</div>
<div class="h center" style="left:1087.8px;top:6.44px;width:177.5999999999999px">Fund End Date</div>
<div class="h center" style="left:1290.3999999999999px;top:6.44px;width:96.40000000000009px">Method</div>
<div class="h center" style="left:1411.8px;top:6.44px;width:176.0px">Amount</div>
<div class="h right" style="left:1612.8px;top:6.44px;width:91.5px">Percent</div>
<svg class="abs" style="left:15.099999999999909px;top:43.5px" width="18" height="10" viewBox="0 0 18 10"><path d="M0,10 L9,0.5 L18,10 Z" fill="#1a1a1a"/></svg>
</div>
<div class="hl" style="left:3.2999999999999545px;top:61.2px;width:1713.5px"></div>
<div class="hl" style="left:3.2999999999999545px;top:107.35px;width:1713.5px"></div>
<div class="hl" style="left:3.2999999999999545px;top:153.50px;width:1713.5px"></div>
<div class="hl" style="left:3.2999999999999545px;top:199.65px;width:1713.5px"></div>
<div class="hl" style="left:3.2999999999999545px;top:245.80px;width:1713.5px"></div>
<div class="hl" style="left:3.2999999999999545px;top:291.95px;width:1713.5px"></div>
<div class="hl" style="left:3.2999999999999545px;top:338.10px;width:1713.5px"></div>
<div class="hl" style="left:3.2999999999999545px;top:384.25px;width:1713.5px"></div>
<div class="hl" style="left:3.2999999999999545px;top:430.40px;width:1713.5px"></div>
<div class="hl" style="left:3.2999999999999545px;top:476.55px;width:1713.5px"></div>
<div class="hl" style="left:3.2999999999999545px;top:522.70px;width:1713.5px"></div>
<div class="vl" style="left:95.29999999999995px;top:0;height:540.4px"></div>
<div class="vl" style="left:860.3px;top:0;height:540.4px"></div>
<div class="vl" style="left:1074.3px;top:0;height:540.4px"></div>
<div class="vl" style="left:1276.8999999999999px;top:0;height:540.4px"></div>
<div class="vl" style="left:1398.3px;top:0;height:540.4px"></div>
<div class="vl" style="left:1599.3px;top:0;height:540.4px"></div>
</div>
<div class="sb" style="left:3024.9px;top:477.7px;width:19.4px;height:98.5px"></div>
<div class="panel" style="left:3px;top:1047.5px;width:1605.5px;height:630.5px"></div>
<div class="vis" style="left:23px;top:1064.4px;width:1565px;height:595.2px"></div>
<div class="title" style="left:23.5px;top:1069.9px;font-size:31.5px;transform:scaleX(0.9778)">Documents and Items</div>
<div class="tbl" style="left:23.5px;top:1128.5px;width:1564.5px;height:531.0999999999999px">
<div class="clip" style="left:0;top:61.9px;width:1564.5px;height:469.19999999999993px">
<div class="row" style="left:3.0px;top:0.00px;width:1532.5px;height:46.15px;background:#fff">
<div class="c x left" style="left:12.0px;top:7.70px;width:254.70px">ContractInvoice</div>
<div class="c x left" style="left:289.7px;top:7.70px;width:277.80px">PayablesBilled</div>
<div class="c x left" style="left:590.5px;top:7.70px;width:236.20px">0001 - 0001</div>
<svg class="lk" style="left:851.55px;top:12.5px" width="27" height="18" viewBox="0 0 27 18"><path d="M6.7,11.05 L6,11.05 A5.05,5.05 0 0 1 0.95,6 A5.05,5.05 0 0 1 6,0.95 L11.7,0.95 A5.05,5.05 0 0 1 16.75,6 A5.05,5.05 0 0 1 11.7,11.05 L11.5,11.05"/><path d="M19.6,6.05 L20.1,6.05 A5.05,5.05 0 0 1 25.15,11.1 A5.05,5.05 0 0 1 20.1,16.15 L14.4,16.15 A5.05,5.05 0 0 1 9.35,11.1 A5.05,5.05 0 0 1 14.4,6.05 L14.8,6.05"/></svg>
<div class="fill" style="left:893.4px;top:1.5px;width:231.80000000000007px;height:44.65px;background:#dd5b57"></div>
<div class="c n right" style="left:904.4px;top:7.70px;width:207.80px">$7,125.00</div>
<div class="c x left" style="left:1373.6px;top:7.70px;width:148.40px">00-740000</div>
</div>
<div class="row" style="left:3.0px;top:46.15px;width:1532.5px;height:46.15px;background:#f6f6f6">
<div class="c x left" style="left:12.0px;top:7.70px;width:254.70px">ContractInvoice</div>
<div class="c x left" style="left:289.7px;top:7.70px;width:277.80px">PayablesBilled</div>
<div class="c x left" style="left:590.5px;top:7.70px;width:236.20px">0001 - 0001</div>
<svg class="lk" style="left:851.55px;top:12.5px" width="27" height="18" viewBox="0 0 27 18"><path d="M6.7,11.05 L6,11.05 A5.05,5.05 0 0 1 0.95,6 A5.05,5.05 0 0 1 6,0.95 L11.7,0.95 A5.05,5.05 0 0 1 16.75,6 A5.05,5.05 0 0 1 11.7,11.05 L11.5,11.05"/><path d="M19.6,6.05 L20.1,6.05 A5.05,5.05 0 0 1 25.15,11.1 A5.05,5.05 0 0 1 20.1,16.15 L14.4,16.15 A5.05,5.05 0 0 1 9.35,11.1 A5.05,5.05 0 0 1 14.4,6.05 L14.8,6.05"/></svg>
<div class="fill" style="left:893.4px;top:1.5px;width:231.80000000000007px;height:44.65px;background:#dd5b57"></div>
<div class="c n right" style="left:904.4px;top:7.70px;width:207.80px">$10,000.00</div>
<div class="c x left" style="left:1373.6px;top:7.70px;width:148.40px">.-01</div>
</div>
<div class="row" style="left:3.0px;top:92.30px;width:1532.5px;height:46.15px;background:#fff">
<div class="c x left" style="left:12.0px;top:7.70px;width:254.70px">ContractInvoice</div>
<div class="c x left" style="left:289.7px;top:7.70px;width:277.80px">PayablesBilled</div>
<div class="c x left" style="left:590.5px;top:7.70px;width:236.20px">0001 - 0001</div>
<svg class="lk" style="left:851.55px;top:12.5px" width="27" height="18" viewBox="0 0 27 18"><path d="M6.7,11.05 L6,11.05 A5.05,5.05 0 0 1 0.95,6 A5.05,5.05 0 0 1 6,0.95 L11.7,0.95 A5.05,5.05 0 0 1 16.75,6 A5.05,5.05 0 0 1 11.7,11.05 L11.5,11.05"/><path d="M19.6,6.05 L20.1,6.05 A5.05,5.05 0 0 1 25.15,11.1 A5.05,5.05 0 0 1 20.1,16.15 L14.4,16.15 A5.05,5.05 0 0 1 9.35,11.1 A5.05,5.05 0 0 1 14.4,6.05 L14.8,6.05"/></svg>
<div class="fill" style="left:893.4px;top:1.5px;width:231.80000000000007px;height:44.65px;background:#dd5b57"></div>
<div class="c n right" style="left:904.4px;top:7.70px;width:207.80px">$10,450.00</div>
<div class="c x left" style="left:1373.6px;top:7.70px;width:148.40px">00-740000</div>
</div>
<div class="row" style="left:3.0px;top:138.45px;width:1532.5px;height:46.15px;background:#f6f6f6">
<div class="c x left" style="left:12.0px;top:7.70px;width:254.70px">ContractInvoice</div>
<div class="c x left" style="left:289.7px;top:7.70px;width:277.80px">PayablesBilled</div>
<div class="c x left" style="left:590.5px;top:7.70px;width:236.20px">0001 - 0001</div>
<svg class="lk" style="left:851.55px;top:12.5px" width="27" height="18" viewBox="0 0 27 18"><path d="M6.7,11.05 L6,11.05 A5.05,5.05 0 0 1 0.95,6 A5.05,5.05 0 0 1 6,0.95 L11.7,0.95 A5.05,5.05 0 0 1 16.75,6 A5.05,5.05 0 0 1 11.7,11.05 L11.5,11.05"/><path d="M19.6,6.05 L20.1,6.05 A5.05,5.05 0 0 1 25.15,11.1 A5.05,5.05 0 0 1 20.1,16.15 L14.4,16.15 A5.05,5.05 0 0 1 9.35,11.1 A5.05,5.05 0 0 1 14.4,6.05 L14.8,6.05"/></svg>
<div class="fill" style="left:893.4px;top:1.5px;width:231.80000000000007px;height:44.65px;background:#dd5b57"></div>
<div class="c n right" style="left:904.4px;top:7.70px;width:207.80px">$21,900.00</div>
<div class="c x left" style="left:1373.6px;top:7.70px;width:148.40px">.-01</div>
</div>
<div class="row" style="left:3.0px;top:184.60px;width:1532.5px;height:46.15px;background:#fff">
<div class="c x left" style="left:12.0px;top:7.70px;width:254.70px">ContractInvoice</div>
<div class="c x left" style="left:289.7px;top:7.70px;width:277.80px">PayablesBilled</div>
<div class="c x left" style="left:590.5px;top:7.70px;width:236.20px">0001 - 0001</div>
<svg class="lk" style="left:851.55px;top:12.5px" width="27" height="18" viewBox="0 0 27 18"><path d="M6.7,11.05 L6,11.05 A5.05,5.05 0 0 1 0.95,6 A5.05,5.05 0 0 1 6,0.95 L11.7,0.95 A5.05,5.05 0 0 1 16.75,6 A5.05,5.05 0 0 1 11.7,11.05 L11.5,11.05"/><path d="M19.6,6.05 L20.1,6.05 A5.05,5.05 0 0 1 25.15,11.1 A5.05,5.05 0 0 1 20.1,16.15 L14.4,16.15 A5.05,5.05 0 0 1 9.35,11.1 A5.05,5.05 0 0 1 14.4,6.05 L14.8,6.05"/></svg>
<div class="fill" style="left:893.4px;top:1.5px;width:231.80000000000007px;height:44.65px;background:#dd5b57"></div>
<div class="c n right" style="left:904.4px;top:7.70px;width:207.80px">$35,000.00</div>
<div class="c x left" style="left:1373.6px;top:7.70px;width:148.40px">.-01</div>
</div>
<div class="row" style="left:3.0px;top:230.75px;width:1532.5px;height:46.15px;background:#f6f6f6">
<div class="c x left" style="left:12.0px;top:7.70px;width:254.70px">ContractInvoice</div>
<div class="c x left" style="left:289.7px;top:7.70px;width:277.80px">PayablesBilled</div>
<div class="c x left" style="left:590.5px;top:7.70px;width:236.20px">0001 - 0001 - 0001</div>
<svg class="lk" style="left:851.55px;top:12.5px" width="27" height="18" viewBox="0 0 27 18"><path d="M6.7,11.05 L6,11.05 A5.05,5.05 0 0 1 0.95,6 A5.05,5.05 0 0 1 6,0.95 L11.7,0.95 A5.05,5.05 0 0 1 16.75,6 A5.05,5.05 0 0 1 11.7,11.05 L11.5,11.05"/><path d="M19.6,6.05 L20.1,6.05 A5.05,5.05 0 0 1 25.15,11.1 A5.05,5.05 0 0 1 20.1,16.15 L14.4,16.15 A5.05,5.05 0 0 1 9.35,11.1 A5.05,5.05 0 0 1 14.4,6.05 L14.8,6.05"/></svg>
<div class="c n right" style="left:904.4px;top:7.70px;width:207.80px">$350.00</div>
<div class="c n right" style="left:1137.7px;top:7.70px;width:210.40px">$350.00</div>
<div class="c x left" style="left:1373.6px;top:7.70px;width:148.40px">.-01</div>
</div>
<div class="row" style="left:3.0px;top:276.90px;width:1532.5px;height:46.15px;background:#fff">
<div class="c x left" style="left:12.0px;top:7.70px;width:254.70px">ContractInvoice</div>
<div class="c x left" style="left:289.7px;top:7.70px;width:277.80px">PayablesBilled</div>
<div class="c x left" style="left:590.5px;top:7.70px;width:236.20px">0001 - 0001 - 0001</div>
<svg class="lk" style="left:851.55px;top:12.5px" width="27" height="18" viewBox="0 0 27 18"><path d="M6.7,11.05 L6,11.05 A5.05,5.05 0 0 1 0.95,6 A5.05,5.05 0 0 1 6,0.95 L11.7,0.95 A5.05,5.05 0 0 1 16.75,6 A5.05,5.05 0 0 1 11.7,11.05 L11.5,11.05"/><path d="M19.6,6.05 L20.1,6.05 A5.05,5.05 0 0 1 25.15,11.1 A5.05,5.05 0 0 1 20.1,16.15 L14.4,16.15 A5.05,5.05 0 0 1 9.35,11.1 A5.05,5.05 0 0 1 14.4,6.05 L14.8,6.05"/></svg>
<div class="c n right" style="left:904.4px;top:7.70px;width:207.80px">$2,227.50</div>
<div class="c n right" style="left:1137.7px;top:7.70px;width:210.40px">$2,227.50</div>
<div class="c x left" style="left:1373.6px;top:7.70px;width:148.40px">772181</div>
</div>
<div class="row" style="left:3.0px;top:323.05px;width:1532.5px;height:46.15px;background:#f6f6f6">
<div class="c x left" style="left:12.0px;top:7.70px;width:254.70px">ContractInvoice</div>
<div class="c x left" style="left:289.7px;top:7.70px;width:277.80px">PayablesBilled</div>
<div class="c x left" style="left:590.5px;top:7.70px;width:236.20px">0001 - 0001 - 0001</div>
<svg class="lk" style="left:851.55px;top:12.5px" width="27" height="18" viewBox="0 0 27 18"><path d="M6.7,11.05 L6,11.05 A5.05,5.05 0 0 1 0.95,6 A5.05,5.05 0 0 1 6,0.95 L11.7,0.95 A5.05,5.05 0 0 1 16.75,6 A5.05,5.05 0 0 1 11.7,11.05 L11.5,11.05"/><path d="M19.6,6.05 L20.1,6.05 A5.05,5.05 0 0 1 25.15,11.1 A5.05,5.05 0 0 1 20.1,16.15 L14.4,16.15 A5.05,5.05 0 0 1 9.35,11.1 A5.05,5.05 0 0 1 14.4,6.05 L14.8,6.05"/></svg>
<div class="fill" style="left:893.4px;top:1.5px;width:231.80000000000007px;height:44.65px;background:#dd5b57"></div>
<div class="c n right" style="left:904.4px;top:7.70px;width:207.80px">$2,370.00</div>
<div class="c x left" style="left:1373.6px;top:7.70px;width:148.40px">.-01</div>
</div>
<div class="row" style="left:3.0px;top:369.20px;width:1532.5px;height:46.15px;background:#fff">
<div class="c x left" style="left:12.0px;top:7.70px;width:254.70px">ContractInvoice</div>
<div class="c x left" style="left:289.7px;top:7.70px;width:277.80px">PayablesBilled</div>
<div class="c x left" style="left:590.5px;top:7.70px;width:236.20px">0001 - 0001 - 0001</div>
<svg class="lk" style="left:851.55px;top:12.5px" width="27" height="18" viewBox="0 0 27 18"><path d="M6.7,11.05 L6,11.05 A5.05,5.05 0 0 1 0.95,6 A5.05,5.05 0 0 1 6,0.95 L11.7,0.95 A5.05,5.05 0 0 1 16.75,6 A5.05,5.05 0 0 1 11.7,11.05 L11.5,11.05"/><path d="M19.6,6.05 L20.1,6.05 A5.05,5.05 0 0 1 25.15,11.1 A5.05,5.05 0 0 1 20.1,16.15 L14.4,16.15 A5.05,5.05 0 0 1 9.35,11.1 A5.05,5.05 0 0 1 14.4,6.05 L14.8,6.05"/></svg>
<div class="c n right" style="left:904.4px;top:7.70px;width:207.80px">$4,125.00</div>
<div class="c n right" style="left:1137.7px;top:7.70px;width:210.40px">$4,125.00</div>
<div class="c x left" style="left:1373.6px;top:7.70px;width:148.40px">.-01</div>
</div>
<div class="row" style="left:3.0px;top:415.35px;width:1532.5px;height:46.15px;background:#f6f6f6">
<div class="c x left" style="left:12.0px;top:7.70px;width:254.70px">ContractInvoice</div>
<div class="c x left" style="left:289.7px;top:7.70px;width:277.80px">PayablesBilled</div>
<div class="c x left" style="left:590.5px;top:7.70px;width:236.20px">0001 - 0001 - 0001</div>
<svg class="lk" style="left:851.55px;top:12.5px" width="27" height="18" viewBox="0 0 27 18"><path d="M6.7,11.05 L6,11.05 A5.05,5.05 0 0 1 0.95,6 A5.05,5.05 0 0 1 6,0.95 L11.7,0.95 A5.05,5.05 0 0 1 16.75,6 A5.05,5.05 0 0 1 11.7,11.05 L11.5,11.05"/><path d="M19.6,6.05 L20.1,6.05 A5.05,5.05 0 0 1 25.15,11.1 A5.05,5.05 0 0 1 20.1,16.15 L14.4,16.15 A5.05,5.05 0 0 1 9.35,11.1 A5.05,5.05 0 0 1 14.4,6.05 L14.8,6.05"/></svg>
<div class="fill" style="left:893.4px;top:1.5px;width:231.80000000000007px;height:44.65px;background:#dd5b57"></div>
<div class="c n right" style="left:904.4px;top:7.70px;width:207.80px">$4,500.00</div>
<div class="c x left" style="left:1373.6px;top:7.70px;width:148.40px">895721</div>
</div>
<div class="row" style="left:3.0px;top:461.50px;width:1532.5px;height:46.15px;background:#fff">
</div>
</div>
<div class="hdr" style="left:0;top:0;width:1564.5px;height:61.9px">
<div class="h center" style="left:15.0px;top:8.24px;width:252.7px">Kahua App</div>
<div class="h center" style="left:292.7px;top:8.24px;width:275.8px">Attribute</div>
<div class="h center" style="left:593.5px;top:8.24px;width:234.20000000000005px">Document - Item</div>
<div class="h center" style="left:907.4px;top:8.24px;width:208.30000000000007px">Cost Item Value</div>
<div class="h center" style="left:1140.7px;top:8.24px;width:210.89999999999986px">Fund Item Value</div>
<div class="h center" style="left:1376.6px;top:8.24px;width:146.4000000000001px">WBS Code</div>
<svg class="abs" style="left:594.0px;top:42.09999999999991px" width="18" height="10" viewBox="0 0 18 10"><path d="M0,10 L9,0.5 L18,10 Z" fill="#1a1a1a"/></svg>
</div>
<div class="hl" style="left:3.0px;top:60.9px;width:1532.5px"></div>
<div class="hl" style="left:3.0px;top:107.05px;width:1532.5px"></div>
<div class="hl" style="left:3.0px;top:153.20px;width:1532.5px"></div>
<div class="hl" style="left:3.0px;top:199.35px;width:1532.5px"></div>
<div class="hl" style="left:3.0px;top:245.50px;width:1532.5px"></div>
<div class="hl" style="left:3.0px;top:291.65px;width:1532.5px"></div>
<div class="hl" style="left:3.0px;top:337.80px;width:1532.5px"></div>
<div class="hl" style="left:3.0px;top:383.95px;width:1532.5px"></div>
<div class="hl" style="left:3.0px;top:430.10px;width:1532.5px"></div>
<div class="hl" style="left:3.0px;top:476.25px;width:1532.5px"></div>
<div class="hl" style="left:3.0px;top:522.40px;width:1532.5px"></div>
<div class="vl" style="left:279.2px;top:0;height:531.0999999999999px"></div>
<div class="vl" style="left:580.0px;top:0;height:531.0999999999999px"></div>
<div class="vl" style="left:839.2px;top:0;height:531.0999999999999px"></div>
<div class="vl" style="left:893.9px;top:0;height:531.0999999999999px"></div>
<div class="vl" style="left:1127.2px;top:0;height:531.0999999999999px"></div>
<div class="vl" style="left:1363.1px;top:0;height:531.0999999999999px"></div>
</div>
<div class="sb" style="left:1568px;top:1130px;width:18px;height:21px"></div>
<div class="panel" style="left:1630px;top:1047.5px;width:940px;height:630.5px"></div>
<div class="vis" style="left:1646px;top:1064px;width:906px;height:594.7px"></div>
<div class="title" style="left:1646.5px;top:1070.1px;font-size:31.5px;transform:scaleX(0.9492)">Available Fund Sources</div>
<div class="tbl" style="left:1646px;top:1128.6px;width:906px;height:530.1000000000001px">
<div class="clip" style="left:0;top:62.4px;width:906px;height:424.0000000000001px">
<div class="row" style="left:4px;top:0.00px;width:878.5999999999999px;height:46.15px;background:#fff">
<div class="c x left" style="left:12.5px;top:7.50px;width:330.00px">2016 Bond Construction</div>
<svg class="lk" style="left:368.0px;top:12.5px" width="27" height="18" viewBox="0 0 27 18"><path d="M6.7,11.05 L6,11.05 A5.05,5.05 0 0 1 0.95,6 A5.05,5.05 0 0 1 6,0.95 L11.7,0.95 A5.05,5.05 0 0 1 16.75,6 A5.05,5.05 0 0 1 11.7,11.05 L11.5,11.05"/><path d="M19.6,6.05 L20.1,6.05 A5.05,5.05 0 0 1 25.15,11.1 A5.05,5.05 0 0 1 20.1,16.15 L14.4,16.15 A5.05,5.05 0 0 1 9.35,11.1 A5.05,5.05 0 0 1 14.4,6.05 L14.8,6.05"/></svg>
<div class="c n right" style="left:421.5px;top:7.50px;width:212.50px">$515,000.00</div>
</div>
<div class="row" style="left:4px;top:46.15px;width:878.5999999999999px;height:46.15px;background:#f6f6f6">
<div class="c x left" style="left:12.5px;top:7.50px;width:330.00px">2016 Bond Sale Proceeds</div>
<svg class="lk" style="left:368.0px;top:12.5px" width="27" height="18" viewBox="0 0 27 18"><path d="M6.7,11.05 L6,11.05 A5.05,5.05 0 0 1 0.95,6 A5.05,5.05 0 0 1 6,0.95 L11.7,0.95 A5.05,5.05 0 0 1 16.75,6 A5.05,5.05 0 0 1 11.7,11.05 L11.5,11.05"/><path d="M19.6,6.05 L20.1,6.05 A5.05,5.05 0 0 1 25.15,11.1 A5.05,5.05 0 0 1 20.1,16.15 L14.4,16.15 A5.05,5.05 0 0 1 9.35,11.1 A5.05,5.05 0 0 1 14.4,6.05 L14.8,6.05"/></svg>
<div class="c n right" style="left:421.5px;top:7.50px;width:212.50px">$115,000.00</div>
</div>
<div class="row" style="left:4px;top:92.30px;width:878.5999999999999px;height:46.15px;background:#fff">
<div class="c x left" style="left:12.5px;top:7.50px;width:330.00px">2018 - 2019 PECO</div>
<svg class="lk" style="left:368.0px;top:12.5px" width="27" height="18" viewBox="0 0 27 18"><path d="M6.7,11.05 L6,11.05 A5.05,5.05 0 0 1 0.95,6 A5.05,5.05 0 0 1 6,0.95 L11.7,0.95 A5.05,5.05 0 0 1 16.75,6 A5.05,5.05 0 0 1 11.7,11.05 L11.5,11.05"/><path d="M19.6,6.05 L20.1,6.05 A5.05,5.05 0 0 1 25.15,11.1 A5.05,5.05 0 0 1 20.1,16.15 L14.4,16.15 A5.05,5.05 0 0 1 9.35,11.1 A5.05,5.05 0 0 1 14.4,6.05 L14.8,6.05"/></svg>
<div class="c n right" style="left:421.5px;top:7.50px;width:212.50px">$199,860.50</div>
<div class="c n right" style="left:659.5px;top:7.50px;width:206.10px">$199,840.50</div>
</div>
<div class="row" style="left:4px;top:138.45px;width:878.5999999999999px;height:79.95px;background:#f6f6f6">
<div class="c x left" style="left:12.5px;top:7.50px;width:330.00px">2019 - 2020 DONATION (FY<br>20/21 BUD AUTH)</div>
<svg class="lk" style="left:368.0px;top:12.5px" width="27" height="18" viewBox="0 0 27 18"><path d="M6.7,11.05 L6,11.05 A5.05,5.05 0 0 1 0.95,6 A5.05,5.05 0 0 1 6,0.95 L11.7,0.95 A5.05,5.05 0 0 1 16.75,6 A5.05,5.05 0 0 1 11.7,11.05 L11.5,11.05"/><path d="M19.6,6.05 L20.1,6.05 A5.05,5.05 0 0 1 25.15,11.1 A5.05,5.05 0 0 1 20.1,16.15 L14.4,16.15 A5.05,5.05 0 0 1 9.35,11.1 A5.05,5.05 0 0 1 14.4,6.05 L14.8,6.05"/></svg>
<div class="c n right" style="left:421.5px;top:7.50px;width:212.50px">$1,000,000.00</div>
</div>
<div class="row" style="left:4px;top:218.40px;width:878.5999999999999px;height:46.15px;background:#fff">
<div class="c x left" style="left:12.5px;top:7.50px;width:330.00px">2024 Bond</div>
<svg class="lk" style="left:368.0px;top:12.5px" width="27" height="18" viewBox="0 0 27 18"><path d="M6.7,11.05 L6,11.05 A5.05,5.05 0 0 1 0.95,6 A5.05,5.05 0 0 1 6,0.95 L11.7,0.95 A5.05,5.05 0 0 1 16.75,6 A5.05,5.05 0 0 1 11.7,11.05 L11.5,11.05"/><path d="M19.6,6.05 L20.1,6.05 A5.05,5.05 0 0 1 25.15,11.1 A5.05,5.05 0 0 1 20.1,16.15 L14.4,16.15 A5.05,5.05 0 0 1 9.35,11.1 A5.05,5.05 0 0 1 14.4,6.05 L14.8,6.05"/></svg>
<div class="c n right" style="left:421.5px;top:7.50px;width:212.50px">$42,500,000.00</div>
<div class="c n right" style="left:659.5px;top:7.50px;width:206.10px">$7,681,000.00</div>
</div>
<div class="row" style="left:4px;top:264.55px;width:878.5999999999999px;height:46.15px;background:#f6f6f6">
<div class="c x left" style="left:12.5px;top:7.50px;width:330.00px">2024 Bond Measure</div>
<svg class="lk" style="left:368.0px;top:12.5px" width="27" height="18" viewBox="0 0 27 18"><path d="M6.7,11.05 L6,11.05 A5.05,5.05 0 0 1 0.95,6 A5.05,5.05 0 0 1 6,0.95 L11.7,0.95 A5.05,5.05 0 0 1 16.75,6 A5.05,5.05 0 0 1 11.7,11.05 L11.5,11.05"/><path d="M19.6,6.05 L20.1,6.05 A5.05,5.05 0 0 1 25.15,11.1 A5.05,5.05 0 0 1 20.1,16.15 L14.4,16.15 A5.05,5.05 0 0 1 9.35,11.1 A5.05,5.05 0 0 1 14.4,6.05 L14.8,6.05"/></svg>
<div class="c n right" style="left:421.5px;top:7.50px;width:212.50px">$73,200,000.00</div>
<div class="c n right" style="left:659.5px;top:7.50px;width:206.10px">$21,074,500.00</div>
</div>
<div class="row" style="left:4px;top:310.70px;width:878.5999999999999px;height:46.15px;background:#fff">
<div class="c x left" style="left:12.5px;top:7.50px;width:330.00px">Activities &amp; Service Fees</div>
<svg class="lk" style="left:368.0px;top:12.5px" width="27" height="18" viewBox="0 0 27 18"><path d="M6.7,11.05 L6,11.05 A5.05,5.05 0 0 1 0.95,6 A5.05,5.05 0 0 1 6,0.95 L11.7,0.95 A5.05,5.05 0 0 1 16.75,6 A5.05,5.05 0 0 1 11.7,11.05 L11.5,11.05"/><path d="M19.6,6.05 L20.1,6.05 A5.05,5.05 0 0 1 25.15,11.1 A5.05,5.05 0 0 1 20.1,16.15 L14.4,16.15 A5.05,5.05 0 0 1 9.35,11.1 A5.05,5.05 0 0 1 14.4,6.05 L14.8,6.05"/></svg>
<div class="c n right" style="left:421.5px;top:7.50px;width:212.50px">$2,495,406.00</div>
</div>
<div class="row" style="left:4px;top:356.85px;width:878.5999999999999px;height:46.15px;background:#f6f6f6">
<div class="c x left" style="left:12.5px;top:7.50px;width:330.00px">Activities &amp; Service Fees</div>
<svg class="lk" style="left:368.0px;top:12.5px" width="27" height="18" viewBox="0 0 27 18"><path d="M6.7,11.05 L6,11.05 A5.05,5.05 0 0 1 0.95,6 A5.05,5.05 0 0 1 6,0.95 L11.7,0.95 A5.05,5.05 0 0 1 16.75,6 A5.05,5.05 0 0 1 11.7,11.05 L11.5,11.05"/><path d="M19.6,6.05 L20.1,6.05 A5.05,5.05 0 0 1 25.15,11.1 A5.05,5.05 0 0 1 20.1,16.15 L14.4,16.15 A5.05,5.05 0 0 1 9.35,11.1 A5.05,5.05 0 0 1 14.4,6.05 L14.8,6.05"/></svg>
<div class="c n right" style="left:421.5px;top:7.50px;width:212.50px">$831,802.00</div>
<div class="c n right" style="left:659.5px;top:7.50px;width:206.10px">$831,802.00</div>
</div>
<div class="row" style="left:4px;top:403.00px;width:878.5999999999999px;height:46.15px;background:#fff">
<div class="c x left" style="left:12.5px;top:7.50px;width:330.00px">Activities &amp; Service Fees</div>
<svg class="lk" style="left:368.0px;top:12.5px" width="27" height="18" viewBox="0 0 27 18"><path d="M6.7,11.05 L6,11.05 A5.05,5.05 0 0 1 0.95,6 A5.05,5.05 0 0 1 6,0.95 L11.7,0.95 A5.05,5.05 0 0 1 16.75,6 A5.05,5.05 0 0 1 11.7,11.05 L11.5,11.05"/><path d="M19.6,6.05 L20.1,6.05 A5.05,5.05 0 0 1 25.15,11.1 A5.05,5.05 0 0 1 20.1,16.15 L14.4,16.15 A5.05,5.05 0 0 1 9.35,11.1 A5.05,5.05 0 0 1 14.4,6.05 L14.8,6.05"/></svg>
<div class="c n right" style="left:421.5px;top:7.50px;width:212.50px">$284,237.44</div>
</div>
</div>
<div class="hdr" style="left:0;top:0;width:906px;height:62.4px">
<div class="h center" style="left:16.5px;top:7.84px;width:328.0px">Fund Source</div>
<div class="h center" style="left:425.5px;top:7.84px;width:213.0px">Released</div>
<div class="h center" style="left:663.5px;top:7.84px;width:206.5999999999999px">Budgeted</div>
</div>
<div class="tot" style="left:0;top:486.4000000000001px;width:906px;height:43.700000000000045px">
<div class="h t sb2 left" style="font-size:24.6px;left:16.5px;top:7.64px;width:330.00px">Total</div>
<div class="h t sb2 right" style="font-size:24.6px;left:425.5px;top:7.64px;width:212.50px">$1,323,898,235.42</div>
<div class="h t sb2 right" style="font-size:24.6px;left:663.5px;top:7.64px;width:206.10px">$910,778,756.18</div>
</div>
<div class="hl" style="left:4px;top:61.4px;width:878.5999999999999px"></div>
<div class="hl" style="left:4px;top:107.55px;width:878.5999999999999px"></div>
<div class="hl" style="left:4px;top:153.70px;width:878.5999999999999px"></div>
<div class="hl" style="left:4px;top:199.85px;width:878.5999999999999px"></div>
<div class="hl" style="left:4px;top:279.80px;width:878.5999999999999px"></div>
<div class="hl" style="left:4px;top:325.95px;width:878.5999999999999px"></div>
<div class="hl" style="left:4px;top:372.10px;width:878.5999999999999px"></div>
<div class="hl" style="left:4px;top:418.25px;width:878.5999999999999px"></div>
<div class="hl" style="left:4px;top:464.40px;width:878.5999999999999px"></div>
<div class="vl" style="left:356px;top:0;height:530.1000000000001px"></div>
<div class="vl" style="left:412px;top:0;height:530.1000000000001px"></div>
<div class="vl" style="left:650px;top:0;height:530.1000000000001px"></div>
</div>
<div class="sb" style="left:2533px;top:1130px;width:18px;height:63px"></div>
<div class="panel" style="left:2592px;top:1047.8px;width:473.6px;height:632.2px"></div>
<div class="vis" style="left:2605px;top:1066.7px;width:439px;height:594.1px"></div>
<div class="title" style="left:2605.5px;top:1072.0px;font-size:31.5px;transform:scaleX(0.9556)">WBS Codes Included</div>
<div class="tbl" style="left:2605px;top:1129.7px;width:439px;height:531.0999999999999px">
<div class="clip" style="left:0;top:62.3px;width:439px;height:468.7999999999999px">
<div class="row" style="left:3px;top:0.00px;width:409px;height:46.10px;background:#fff">
<div class="c x left" style="left:12.5px;top:7.50px;width:167.50px">.</div>
<div class="c x left" style="left:203.0px;top:7.50px;width:195.50px">No</div>
</div>
<div class="row" style="left:3px;top:46.10px;width:409px;height:46.10px;background:#f6f6f6">
<div class="c x left" style="left:12.5px;top:7.50px;width:167.50px">.</div>
<div class="c x left" style="left:203.0px;top:7.50px;width:195.50px">Yes</div>
</div>
<div class="row" style="left:3px;top:92.20px;width:409px;height:46.10px;background:#fff">
<div class="c x left" style="left:12.5px;top:7.50px;width:167.50px">.-01</div>
<div class="c x left" style="left:203.0px;top:7.50px;width:195.50px">No</div>
</div>
<div class="row" style="left:3px;top:138.30px;width:409px;height:46.10px;background:#f6f6f6">
<div class="c x left" style="left:12.5px;top:7.50px;width:167.50px">.-01</div>
<div class="c x left" style="left:203.0px;top:7.50px;width:195.50px">Yes</div>
</div>
<div class="row" style="left:3px;top:184.40px;width:409px;height:46.10px;background:#fff">
<div class="c x left" style="left:12.5px;top:7.50px;width:167.50px">.-02</div>
<div class="c x left" style="left:203.0px;top:7.50px;width:195.50px">No</div>
</div>
<div class="row" style="left:3px;top:230.50px;width:409px;height:46.10px;background:#f6f6f6">
<div class="c x left" style="left:12.5px;top:7.50px;width:167.50px">.-02</div>
<div class="c x left" style="left:203.0px;top:7.50px;width:195.50px">Yes</div>
</div>
<div class="row" style="left:3px;top:276.60px;width:409px;height:46.10px;background:#fff">
<div class="c x left" style="left:12.5px;top:7.50px;width:167.50px">.-03</div>
<div class="c x left" style="left:203.0px;top:7.50px;width:195.50px">No</div>
</div>
<div class="row" style="left:3px;top:322.70px;width:409px;height:46.10px;background:#f6f6f6">
<div class="c x left" style="left:12.5px;top:7.50px;width:167.50px">.-03</div>
<div class="c x left" style="left:203.0px;top:7.50px;width:195.50px">Yes</div>
</div>
<div class="row" style="left:3px;top:368.80px;width:409px;height:46.10px;background:#fff">
<div class="c x left" style="left:12.5px;top:7.50px;width:167.50px">.-04</div>
<div class="c x left" style="left:203.0px;top:7.50px;width:195.50px">No</div>
</div>
<div class="row" style="left:3px;top:414.90px;width:409px;height:46.10px;background:#f6f6f6">
<div class="c x left" style="left:12.5px;top:7.50px;width:167.50px">.-04</div>
<div class="c x left" style="left:203.0px;top:7.50px;width:195.50px">Yes</div>
</div>
<div class="row" style="left:3px;top:461.00px;width:409px;height:46.10px;background:#fff">
</div>
</div>
<div class="hdr" style="left:0;top:0;width:439px;height:62.3px">
<div class="h center" style="left:15.5px;top:7.74px;width:165.5px">WBS Code</div>
<div class="h center" style="left:206.0px;top:7.74px;width:193.5px">Include Children</div>
</div>
<div class="hl" style="left:3px;top:61.3px;width:409px"></div>
<div class="hl" style="left:3px;top:107.40px;width:409px"></div>
<div class="hl" style="left:3px;top:153.50px;width:409px"></div>
<div class="hl" style="left:3px;top:199.60px;width:409px"></div>
<div class="hl" style="left:3px;top:245.70px;width:409px"></div>
<div class="hl" style="left:3px;top:291.80px;width:409px"></div>
<div class="hl" style="left:3px;top:337.90px;width:409px"></div>
<div class="hl" style="left:3px;top:384.00px;width:409px"></div>
<div class="hl" style="left:3px;top:430.10px;width:409px"></div>
<div class="hl" style="left:3px;top:476.20px;width:409px"></div>
<div class="hl" style="left:3px;top:522.30px;width:409px"></div>
<div class="vl" style="left:192.5px;top:0;height:531.0999999999999px"></div>
</div>
<div class="sb" style="left:3023px;top:1131.8px;width:19px;height:53px"></div>
</body></html>
